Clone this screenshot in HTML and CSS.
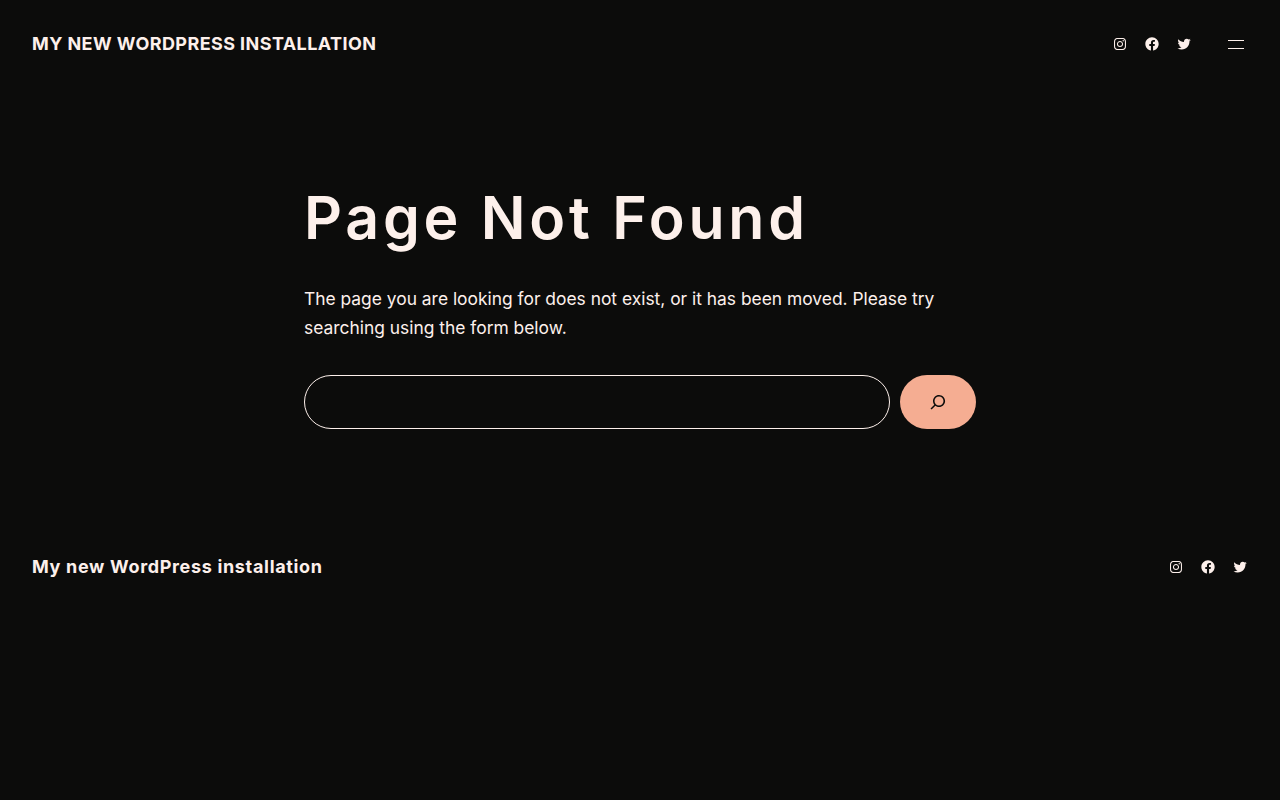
FILE: index.html
```html
<!DOCTYPE html>
<html lang="en">
<head>
    <meta charset="UTF-8">
    <meta name="viewport" content="width=device-width, initial-scale=1.0">
    <title>Page Not Found</title>
    <link rel="stylesheet" href="styles.css">
</head>
<body>
    <header class="site-header">
        <a class="site-title" href="#">My new WordPress installation</a>
        <div class="header-tools">
            <ul class="social-links">
                <li><a href="#" aria-label="Instagram"><svg viewBox="0 0 24 24" class="social-icon"><path d="M12,4.622c2.403,0,2.688,0.009,3.637,0.052c0.877,0.04,1.354,0.187,1.671,0.31c0.42,0.163,0.72,0.358,1.035,0.673 c0.315,0.315,0.51,0.615,0.673,1.035c0.123,0.317,0.27,0.794,0.31,1.671c0.043,0.949,0.052,1.234,0.052,3.637 s-0.009,2.688-0.052,3.637c-0.04,0.877-0.187,1.354-0.31,1.671c-0.163,0.42-0.358,0.72-0.673,1.035 c-0.315,0.315-0.615,0.51-1.035,0.673c-0.317,0.123-0.794,0.27-1.671,0.31c-0.949,0.043-1.234,0.052-3.637,0.052 s-2.688-0.009-3.637-0.052c-0.877-0.04-1.354-0.187-1.671-0.31c-0.42-0.163-0.72-0.358-1.035-0.673 c-0.315-0.315-0.51-0.615-0.673-1.035c-0.123-0.317-0.27-0.794-0.31-1.671C4.631,14.688,4.622,14.403,4.622,12 s0.009-2.688,0.052-3.637c0.04-0.877,0.187-1.354,0.31-1.671c0.163-0.42,0.358-0.72,0.673-1.035 c0.315-0.315,0.615-0.51,1.035-0.673c0.317-0.123,0.794-0.27,1.671-0.31C9.312,4.631,9.597,4.622,12,4.622 M12,3 C9.556,3,9.249,3.01,8.289,3.054C7.331,3.098,6.677,3.25,6.105,3.472C5.513,3.702,5.011,4.01,4.511,4.511 c-0.5,0.5-0.808,1.002-1.038,1.594C3.25,6.677,3.098,7.331,3.054,8.289C3.01,9.249,3,9.556,3,12c0,2.444,0.01,2.751,0.054,3.711 c0.044,0.958,0.196,1.612,0.418,2.185c0.23,0.592,0.538,1.094,1.038,1.594c0.5,0.5,1.002,0.808,1.594,1.038 c0.572,0.222,1.227,0.375,2.185,0.418C9.249,20.99,9.556,21,12,21s2.751-0.01,3.711-0.054c0.958-0.044,1.612-0.196,2.185-0.418 c0.592-0.23,1.094-0.538,1.594-1.038c0.5-0.5,0.808-1.002,1.038-1.594c0.222-0.572,0.375-1.227,0.418-2.185 C20.99,14.751,21,14.444,21,12s-0.01-2.751-0.054-3.711c-0.044-0.958-0.196-1.612-0.418-2.185c-0.23-0.592-0.538-1.094-1.038-1.594 c-0.5-0.5-1.002-0.808-1.594-1.038c-0.572-0.222-1.227-0.375-2.185-0.418C14.751,3.01,14.444,3,12,3L12,3z M12,7.378 c-2.552,0-4.622,2.069-4.622,4.622S9.448,16.622,12,16.622s4.622-2.069,4.622-4.622S14.552,7.378,12,7.378z M12,15 c-1.657,0-3-1.343-3-3s1.343-3,3-3s3,1.343,3,3S13.657,15,12,15z M16.804,6.116c-0.596,0-1.08,0.484-1.08,1.08 s0.484,1.08,1.08,1.08c0.596,0,1.08-0.484,1.08-1.08S17.401,6.116,16.804,6.116z"/></svg></a></li>
                <li><a href="#" aria-label="Facebook"><svg viewBox="0 0 24 24" class="social-icon"><path d="M12 2C6.5 2 2 6.5 2 12c0 5 3.7 9.1 8.4 9.9v-7H7.9V12h2.5V9.8c0-2.5 1.5-3.9 3.8-3.9 1.1 0 2.2.2 2.2.2v2.5h-1.3c-1.2 0-1.6.8-1.6 1.6V12h2.8l-.4 2.9h-2.3v7C18.3 21.1 22 17 22 12c0-5.5-4.5-10-10-10z"/></svg></a></li>
                <li><a href="#" aria-label="Twitter"><svg viewBox="0 0 24 24" class="social-icon"><path d="M22.23,5.924c-0.736,0.326-1.527,0.547-2.357,0.646c0.847-0.508,1.498-1.312,1.804-2.27 c-0.793,0.47-1.671,0.812-2.606,0.996C18.324,4.498,17.257,4,16.077,4c-2.266,0-4.103,1.837-4.103,4.103 c0,0.322,0.036,0.635,0.106,0.935C8.67,8.867,5.647,7.234,3.623,4.751C3.27,5.357,3.067,6.062,3.067,6.814 c0,1.424,0.724,2.679,1.825,3.415c-0.673-0.021-1.305-0.206-1.859-0.513c0,0.017,0,0.034,0,0.052c0,1.988,1.414,3.647,3.292,4.023 c-0.344,0.094-0.707,0.144-1.081,0.144c-0.264,0-0.521-0.026-0.772-0.074c0.522,1.63,2.038,2.816,3.833,2.85 c-1.404,1.1-3.174,1.756-5.096,1.756c-0.331,0-0.658-0.019-0.979-0.057c1.816,1.164,3.973,1.843,6.29,1.843 c7.547,0,11.675-6.252,11.675-11.675c0-0.178-0.004-0.355-0.012-0.531C20.985,7.47,21.68,6.747,22.23,5.924z"/></svg></a></li>
            </ul>
            <button class="menu-toggle" aria-label="Open menu"><span></span><span></span></button>
        </div>
    </header>

    <main class="content">
        <h1>Page Not Found</h1>
        <p>The page you are looking for does not exist, or it has been moved. Please try searching using the form below.</p>
        <form class="search-form">
            <input type="search" class="search-input" aria-label="Search">
            <button type="button" class="search-button" aria-label="Search">
                <svg viewBox="0 0 24 24" class="search-icon"><path d="M13 5c-3.3 0-6 2.7-6 6 0 1.4.5 2.7 1.3 3.7l-3.8 3.8 1.1 1.1 3.8-3.8c1 .8 2.3 1.3 3.7 1.3 3.3 0 6-2.7 6-6S16.3 5 13 5zm0 10.5c-2.5 0-4.5-2-4.5-4.5s2-4.5 4.5-4.5 4.5 2 4.5 4.5-2 4.5-4.5 4.5z"/></svg>
            </button>
        </form>
    </main>

    <footer class="site-footer">
        <a class="footer-title" href="#">My new WordPress installation</a>
        <ul class="social-links">
            <li><a href="#" aria-label="Instagram"><svg viewBox="0 0 24 24" class="social-icon"><path d="M12,4.622c2.403,0,2.688,0.009,3.637,0.052c0.877,0.04,1.354,0.187,1.671,0.31c0.42,0.163,0.72,0.358,1.035,0.673 c0.315,0.315,0.51,0.615,0.673,1.035c0.123,0.317,0.27,0.794,0.31,1.671c0.043,0.949,0.052,1.234,0.052,3.637 s-0.009,2.688-0.052,3.637c-0.04,0.877-0.187,1.354-0.31,1.671c-0.163,0.42-0.358,0.72-0.673,1.035 c-0.315,0.315-0.615,0.51-1.035,0.673c-0.317,0.123-0.794,0.27-1.671,0.31c-0.949,0.043-1.234,0.052-3.637,0.052 s-2.688-0.009-3.637-0.052c-0.877-0.04-1.354-0.187-1.671-0.31c-0.42-0.163-0.72-0.358-1.035-0.673 c-0.315-0.315-0.51-0.615-0.673-1.035c-0.123-0.317-0.27-0.794-0.31-1.671C4.631,14.688,4.622,14.403,4.622,12 s0.009-2.688,0.052-3.637c0.04-0.877,0.187-1.354,0.31-1.671c0.163-0.42,0.358-0.72,0.673-1.035 c0.315-0.315,0.615-0.51,1.035-0.673c0.317-0.123,0.794-0.27,1.671-0.31C9.312,4.631,9.597,4.622,12,4.622 M12,3 C9.556,3,9.249,3.01,8.289,3.054C7.331,3.098,6.677,3.25,6.105,3.472C5.513,3.702,5.011,4.01,4.511,4.511 c-0.5,0.5-0.808,1.002-1.038,1.594C3.25,6.677,3.098,7.331,3.054,8.289C3.01,9.249,3,9.556,3,12c0,2.444,0.01,2.751,0.054,3.711 c0.044,0.958,0.196,1.612,0.418,2.185c0.23,0.592,0.538,1.094,1.038,1.594c0.5,0.5,1.002,0.808,1.594,1.038 c0.572,0.222,1.227,0.375,2.185,0.418C9.249,20.99,9.556,21,12,21s2.751-0.01,3.711-0.054c0.958-0.044,1.612-0.196,2.185-0.418 c0.592-0.23,1.094-0.538,1.594-1.038c0.5-0.5,0.808-1.002,1.038-1.594c0.222-0.572,0.375-1.227,0.418-2.185 C20.99,14.751,21,14.444,21,12s-0.01-2.751-0.054-3.711c-0.044-0.958-0.196-1.612-0.418-2.185c-0.23-0.592-0.538-1.094-1.038-1.594 c-0.5-0.5-1.002-0.808-1.594-1.038c-0.572-0.222-1.227-0.375-2.185-0.418C14.751,3.01,14.444,3,12,3L12,3z M12,7.378 c-2.552,0-4.622,2.069-4.622,4.622S9.448,16.622,12,16.622s4.622-2.069,4.622-4.622S14.552,7.378,12,7.378z M12,15 c-1.657,0-3-1.343-3-3s1.343-3,3-3s3,1.343,3,3S13.657,15,12,15z M16.804,6.116c-0.596,0-1.08,0.484-1.08,1.08 s0.484,1.08,1.08,1.08c0.596,0,1.08-0.484,1.08-1.08S17.401,6.116,16.804,6.116z"/></svg></a></li>
            <li><a href="#" aria-label="Facebook"><svg viewBox="0 0 24 24" class="social-icon"><path d="M12 2C6.5 2 2 6.5 2 12c0 5 3.7 9.1 8.4 9.9v-7H7.9V12h2.5V9.8c0-2.5 1.5-3.9 3.8-3.9 1.1 0 2.2.2 2.2.2v2.5h-1.3c-1.2 0-1.6.8-1.6 1.6V12h2.8l-.4 2.9h-2.3v7C18.3 21.1 22 17 22 12c0-5.5-4.5-10-10-10z"/></svg></a></li>
            <li><a href="#" aria-label="Twitter"><svg viewBox="0 0 24 24" class="social-icon"><path d="M22.23,5.924c-0.736,0.326-1.527,0.547-2.357,0.646c0.847-0.508,1.498-1.312,1.804-2.27 c-0.793,0.47-1.671,0.812-2.606,0.996C18.324,4.498,17.257,4,16.077,4c-2.266,0-4.103,1.837-4.103,4.103 c0,0.322,0.036,0.635,0.106,0.935C8.67,8.867,5.647,7.234,3.623,4.751C3.27,5.357,3.067,6.062,3.067,6.814 c0,1.424,0.724,2.679,1.825,3.415c-0.673-0.021-1.305-0.206-1.859-0.513c0,0.017,0,0.034,0,0.052c0,1.988,1.414,3.647,3.292,4.023 c-0.344,0.094-0.707,0.144-1.081,0.144c-0.264,0-0.521-0.026-0.772-0.074c0.522,1.63,2.038,2.816,3.833,2.85 c-1.404,1.1-3.174,1.756-5.096,1.756c-0.331,0-0.658-0.019-0.979-0.057c1.816,1.164,3.973,1.843,6.29,1.843 c7.547,0,11.675-6.252,11.675-11.675c0-0.178-0.004-0.355-0.012-0.531C20.985,7.47,21.68,6.747,22.23,5.924z"/></svg></a></li>
        </ul>
    </footer>
</body>
</html>
```

FILE: styles.css
```css
* {
    box-sizing: border-box;
}
body {
    margin: 0;
    min-height: 800px;
    background-color: #0c0c0b;
    color: #fdf0eb;
    font-family: Inter, sans-serif;
    font-size: 18px;
    line-height: 29px;
}
a {
    color: inherit;
    text-decoration: none;
}
.site-header {
    display: flex;
    justify-content: space-between;
    align-items: center;
    height: 88px;
    padding: 0 32px;
}
.site-title {
    margin-bottom: 2px;
    font-weight: 700;
    letter-spacing: 0.42px;
    text-transform: uppercase;
}
.header-tools {
    display: flex;
    align-items: center;
    gap: 32px;
}
.social-links {
    display: flex;
    gap: 16px;
    margin: 0;
    padding: 0;
    list-style: none;
}
.social-links li {
    display: flex;
}
.social-links a {
    display: flex;
}
.social-icon {
    width: 16px;
    height: 16px;
    fill: currentColor;
}
.menu-toggle {
    display: flex;
    flex-direction: column;
    align-items: center;
    gap: 7px;
    width: 24px;
    padding: 0;
    background: none;
    border: none;
}
.menu-toggle span {
    display: block;
    width: 16px;
    height: 1px;
    background-color: #fdf0eb;
}
.content {
    width: 672px;
    margin: 0 auto;
    padding-top: 88px;
}
h1 {
    margin: 0;
    font-size: 59px;
    font-weight: 600;
    line-height: 84px;
    letter-spacing: 3.75px;
}
.content p {
    margin: 24px 0 0;
    font-size: 17.4px;
}
.search-form {
    display: flex;
    gap: 10px;
    margin-top: 33px;
}
.search-input {
    flex: 1;
    height: 54px;
    background: none;
    border: 1px solid #fdf0eb;
    border-radius: 27px;
}
.search-button {
    display: flex;
    align-items: center;
    justify-content: center;
    width: 76px;
    height: 54px;
    padding: 0;
    background-color: #f5ad92;
    border: none;
    border-radius: 27px;
}
.search-icon {
    width: 24px;
    height: 24px;
    fill: #0c0c0b;
}
.site-footer {
    display: flex;
    justify-content: space-between;
    align-items: center;
    height: 32px;
    margin-top: 122px;
    padding: 0 32px;
}
.footer-title {
    margin-bottom: 2px;
    font-weight: 700;
    letter-spacing: 0.67px;
}
```
